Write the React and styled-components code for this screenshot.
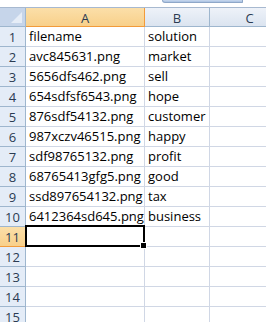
import React from "react";
import styled, { createGlobalStyle, css } from "styled-components";

const Global = createGlobalStyle`
  html, body { margin: 0; padding: 0; background: #ffffff; overflow: hidden; }
  body { font-family: "Open Sans", "Liberation Sans", sans-serif; }
`;

const Page = styled.div`
  width: 266px;
  height: 322px;
  overflow: hidden;
  background: #fff;
`;

const TopStrip = styled.div`
  position: relative;
  height: 8px;
  box-sizing: border-box;
  border-bottom: 1px solid #a7b9d0;
  background: #ffffff;
`;

const ExpandTab = styled.div`
  position: absolute;
  left: 162px;
  top: 0;
  width: 81px;
  height: 3px;
  border-radius: 0 0 3px 6px;
  background: linear-gradient(#c9d9ee, #a9c1e2);
  border: 1px solid #8ea7c8;
  border-top: none;
  box-sizing: border-box;
`;

const GridWrap = styled.div`
  position: relative;
`;

const Sheet = styled.div`
  display: grid;
  grid-template-columns: 26px 119px 65px 80px;
  grid-auto-rows: 20px;
  grid-template-rows: 19px;
`;

const headerBase = css`
  box-sizing: border-box;
  display: flex;
  align-items: center;
  justify-content: center;
  font-size: 13px;
  color: #2b3b52;
  border-right: 1px solid #9eb6ce;
  border-bottom: 1px solid #9eb6ce;
`;

const Corner = styled.div`
  ${headerBase};
  position: relative;
  background: #c6d5ea;
  &::after {
    content: "";
    position: absolute;
    right: 3px;
    bottom: 3px;
    width: 0;
    height: 0;
    border-left: 11px solid transparent;
    border-bottom: 11px solid #e6edf7;
  }
`;

const ColHead = styled.div`
  ${headerBase};
  padding-top: 1px;
  background: ${(p) =>
    p.$active
      ? "linear-gradient(#fbdfa9, #f8d08a)"
      : "linear-gradient(#eef2f9, #dbe4f0)"};
  border-right-color: ${(p) => (p.$active ? "#f29b3a" : "#9eb6ce")};
  border-bottom-color: ${(p) => (p.$active ? "#f29b3a" : "#9eb6ce")};
`;

const RowHead = styled.div`
  ${headerBase};
  padding-top: 1px;
  background: ${(p) =>
    p.$active ? "linear-gradient(#fbdfa9, #f8d08a)" : "#e4ecf7"};
  border-right-color: ${(p) => (p.$active ? "#f29b3a" : "#9eb6ce")};
  border-bottom-color: ${(p) => (p.$active ? "#f29b3a" : "#9eb6ce")};
`;

const Cell = styled.div`
  box-sizing: border-box;
  display: flex;
  align-items: flex-end;
  padding: 0 0 1px 3px;
  font-size: 13px;
  line-height: 18px;
  color: #000;
  white-space: nowrap;
  overflow: hidden;
  border-right: 1px solid #d0d7e5;
  border-bottom: 1px solid #d0d7e5;
`;

const Selection = styled.div`
  position: absolute;
  left: 25px;
  top: 217px;
  width: 120px;
  height: 22px;
  box-sizing: border-box;
  border: 2px solid #000;
  pointer-events: none;
`;

const FillHandle = styled.div`
  position: absolute;
  right: -4px;
  bottom: -4px;
  width: 7px;
  height: 7px;
  box-sizing: border-box;
  background: #000;
  border: 1px solid #fff;
`;

const data = [
  ["filename", "solution"],
  ["avc845631.png", "market"],
  ["5656dfs462.png", "sell"],
  ["654sdfsf6543.png", "hope"],
  ["876sdf54132.png", "customer"],
  ["987xczv46515.png", "happy"],
  ["sdf98765132.png", "profit"],
  ["68765413gfg5.png", "good"],
  ["ssd897654132.png", "tax"],
  ["6412364sd645.png", "business"],
  ["", ""],
  ["", ""],
  ["", ""],
  ["", ""],
  ["", ""],
];

export default function App() {
  return (
    <Page>
      <Global />
      <TopStrip>
        <ExpandTab />
      </TopStrip>
      <GridWrap>
        <Sheet>
          <Corner />
          <ColHead $active>A</ColHead>
          <ColHead>B</ColHead>
          <ColHead>C</ColHead>
          {data.map((row, i) => (
            <React.Fragment key={i}>
              <RowHead $active={i === 10}>{i + 1}</RowHead>
              <Cell>{row[0]}</Cell>
              <Cell>{row[1]}</Cell>
              <Cell />
            </React.Fragment>
          ))}
        </Sheet>
        <Selection>
          <FillHandle />
        </Selection>
      </GridWrap>
    </Page>
  );
}
